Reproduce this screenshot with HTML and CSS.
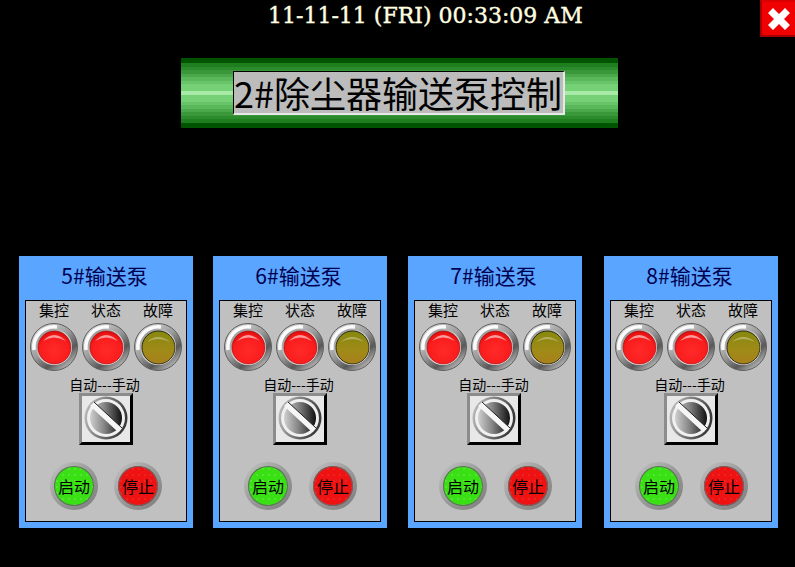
FILE: index.html
```html
<!DOCTYPE html>
<html lang="zh-CN">
<head>
    <meta charset="UTF-8">
    <meta name="viewport" content="width=device-width, initial-scale=1.0">
    <title>2#除尘器输送泵控制</title>
    <link rel="stylesheet" href="styles.css">
</head>
<body>

<!-- shared drawings -->
<svg class="defs" width="0" height="0">
    <defs>
        <linearGradient id="chrome" x1="0.15" y1="0.05" x2="0.85" y2="0.95">
            <stop offset="0" stop-color="#d8d8d8"/>
            <stop offset="0.45" stop-color="#9a9a9a"/>
            <stop offset="0.72" stop-color="#585858"/>
            <stop offset="1" stop-color="#c8c8c8"/>
        </linearGradient>
        <linearGradient id="chromeIn" x1="0.1" y1="0.05" x2="0.9" y2="0.95">
            <stop offset="0" stop-color="#909090"/>
            <stop offset="0.5" stop-color="#d0d0d0"/>
            <stop offset="1" stop-color="#ffffff"/>
        </linearGradient>
        <radialGradient id="redGlow" cx="0.5" cy="0.6" r="0.6">
            <stop offset="0" stop-color="#ff2a2a"/>
            <stop offset="0.75" stop-color="#fa1c1c"/>
            <stop offset="1" stop-color="#d80c0c"/>
        </radialGradient>
        <linearGradient id="oliveGlow" x1="0" y1="0" x2="0" y2="1">
            <stop offset="0" stop-color="#86880e"/>
            <stop offset="0.6" stop-color="#a08a18"/>
            <stop offset="1" stop-color="#a8801c"/>
        </linearGradient>
        <linearGradient id="knob" x1="0" y1="0" x2="1" y2="0">
            <stop offset="0" stop-color="#d0d0d0"/>
            <stop offset="0.45" stop-color="#848484"/>
            <stop offset="1" stop-color="#101010"/>
        </linearGradient>
        <linearGradient id="knobRing" x1="0" y1="0" x2="1" y2="0.3">
            <stop offset="0" stop-color="#c8c8c8"/>
            <stop offset="1" stop-color="#3a3a3a"/>
        </linearGradient>
        <symbol id="lampRed" viewBox="0 0 48 48">
            <circle cx="24" cy="24" r="23.5" fill="url(#chrome)" stroke="#606060"/>
            <path d="M4 27A20.5 20.5 0 0 1 27 4" fill="none" stroke="#fafafa" stroke-width="3.5"/>
            <circle cx="24" cy="24" r="18" fill="url(#chromeIn)"/>
            <circle cx="24.5" cy="24.5" r="16.5" fill="url(#redGlow)" stroke="#a00808" stroke-width="0.6"/>
            <path d="M13 18 Q24 6 36 18 Q24 11 13 18Z" fill="#ff9a9a"/>
        </symbol>
        <symbol id="lampOlive" viewBox="0 0 48 48">
            <circle cx="24" cy="24" r="23.5" fill="url(#chrome)" stroke="#606060"/>
            <path d="M4 27A20.5 20.5 0 0 1 27 4" fill="none" stroke="#fafafa" stroke-width="3.5"/>
            <circle cx="24" cy="24" r="18" fill="url(#chromeIn)"/>
            <circle cx="24.5" cy="24.5" r="16.5" fill="url(#oliveGlow)" stroke="#101000" stroke-width="0.8"/>
            <path d="M13 19 Q24 9 36 19 Q24 13 13 19Z" fill="#b4b060"/>
        </symbol>
        <symbol id="switchTile" viewBox="0 0 54 52">
            <rect width="54" height="52" fill="#000"/>
            <path d="M0 0H54L51 3V49H3L0 52Z" fill="#8c8c8c"/>
            <rect x="3" y="3" width="48" height="46" fill="#e8e8e8"/>
            <circle cx="27" cy="25" r="21.5" fill="url(#knobRing)"/>
            <circle cx="27" cy="25" r="19" fill="#f0f0f0"/>
            <circle cx="27" cy="25" r="16" fill="url(#knob)"/>
            <path d="M11 13L15 9L43 35L39 39Z" fill="#f6f6f6"/>
            <path d="M15 9L43 35" fill="none" stroke="#202020"/>
        </symbol>
    </defs>
</svg>

<header class="topbar">
    <div class="clock">11-11-11 (FRI) 00:33:09 AM</div>
    <button class="close-btn" type="button" aria-label="关闭">
        <svg width="26" height="26" viewBox="0 0 26 26"><path d="M2 7L7 2L13 8L19 2L24 7L18 13L24 19L19 24L13 18L7 24L2 19L8 13Z" fill="#fff"/></svg>
    </button>
</header>

<div class="banner">
    <h1 class="banner-title">2#除尘器输送泵控制</h1>
</div>

<main class="pumps">
    <section class="pump pump-first">
        <h2 class="pump-name">5#输送泵</h2>
        <div class="controls">
            <div class="lamps">
                <span class="lamp-label">集控</span><span class="lamp-label">状态</span><span class="lamp-label">故障</span>
                <svg class="lamp"><use href="#lampRed"/></svg>
                <svg class="lamp"><use href="#lampRed"/></svg>
                <svg class="lamp"><use href="#lampOlive"/></svg>
            </div>
            <div class="mode-label">自动---手动</div>
            <svg class="mode-switch"><use href="#switchTile"/></svg>
            <div class="actions">
                <button class="action action-start" type="button">启动</button>
                <button class="action action-stop" type="button">停止</button>
            </div>
        </div>
    </section>

    <section class="pump">
        <h2 class="pump-name">6#输送泵</h2>
        <div class="controls">
            <div class="lamps">
                <span class="lamp-label">集控</span><span class="lamp-label">状态</span><span class="lamp-label">故障</span>
                <svg class="lamp"><use href="#lampRed"/></svg>
                <svg class="lamp"><use href="#lampRed"/></svg>
                <svg class="lamp"><use href="#lampOlive"/></svg>
            </div>
            <div class="mode-label">自动---手动</div>
            <svg class="mode-switch"><use href="#switchTile"/></svg>
            <div class="actions">
                <button class="action action-start" type="button">启动</button>
                <button class="action action-stop" type="button">停止</button>
            </div>
        </div>
    </section>

    <section class="pump pump-third">
        <h2 class="pump-name">7#输送泵</h2>
        <div class="controls">
            <div class="lamps">
                <span class="lamp-label">集控</span><span class="lamp-label">状态</span><span class="lamp-label">故障</span>
                <svg class="lamp"><use href="#lampRed"/></svg>
                <svg class="lamp"><use href="#lampRed"/></svg>
                <svg class="lamp"><use href="#lampOlive"/></svg>
            </div>
            <div class="mode-label">自动---手动</div>
            <svg class="mode-switch"><use href="#switchTile"/></svg>
            <div class="actions">
                <button class="action action-start" type="button">启动</button>
                <button class="action action-stop" type="button">停止</button>
            </div>
        </div>
    </section>

    <section class="pump pump-fourth">
        <h2 class="pump-name">8#输送泵</h2>
        <div class="controls">
            <div class="lamps">
                <span class="lamp-label">集控</span><span class="lamp-label">状态</span><span class="lamp-label">故障</span>
                <svg class="lamp"><use href="#lampRed"/></svg>
                <svg class="lamp"><use href="#lampRed"/></svg>
                <svg class="lamp"><use href="#lampOlive"/></svg>
            </div>
            <div class="mode-label">自动---手动</div>
            <svg class="mode-switch"><use href="#switchTile"/></svg>
            <div class="actions">
                <button class="action action-start" type="button">启动</button>
                <button class="action action-stop" type="button">停止</button>
            </div>
        </div>
    </section>
</main>

</body>
</html>
```

FILE: styles.css
```css
* {
    box-sizing: border-box;
}
html, body {
    height: 100%;
}
body {
    margin: 0;
    overflow: hidden;
    background: #000;
    font-family: "Noto Sans CJK SC", "Liberation Sans", sans-serif;
    color: #000;
}
.defs {
    display: block;
    height: 0;
}

/* top bar */
.topbar {
    display: flex;
    align-items: flex-start;
    height: 37px;
    padding-left: 268px;
}
.clock {
    font-family: "DejaVu Serif", serif;
    font-size: 22px;
    line-height: 32px;
    -webkit-text-stroke: 0.4px #ffffe0;
    color: #ffffe0;
    white-space: nowrap;
}
.close-btn {
    display: flex;
    align-items: center;
    justify-content: center;
    width: 35px;
    height: 37px;
    margin-left: auto;
    padding: 0;
    border: 2px solid #a80000;
    border-top-color: #d80000;
    border-right: none;
    background: #f00000;
}

/* title banner */
.banner {
    display: flex;
    align-items: center;
    width: 437px;
    height: 70px;
    margin: 21px 0 0 181px;
    padding-left: 52px;
    background: linear-gradient(to bottom,
        #005400 0 5px, #1f7f1f 5px 9px, #2b8a2b 9px 12px, #3a983a 12px 16px, #4aa84a 16px 19px,
        #5ab85a 19px 23px, #68c468 23px 26px, #76d076 26px 33px, #a8eaa8 33px 37px,
        #76d076 37px 44px, #68c468 44px 47px, #5ab85a 47px 51px, #4aa84a 51px 54px,
        #3a983a 54px 58px, #2b8a2b 58px 61px, #1f7f1f 61px 65px, #005400 65px 70px);
}
.banner-title {
    width: 332px;
    height: 44px;
    margin: 0;
    border: 1px solid #000;
    border-right: 2px solid #e8e8e8;
    border-bottom: 2px solid #e8e8e8;
    background: #bcbcbc;
    font-size: 36px;
    font-weight: 400;
    line-height: 40px;
    white-space: nowrap;
}

/* pump panels */
.pumps {
    display: flex;
    gap: 20px;
    margin-top: 128px;
    padding-left: 19px;
}
.pump {
    width: 174px;
    height: 272px;
    padding: 0 6px 6px;
    background: #5aa5ff;
}
.pump-third {
    margin-left: 1px;
}
.pump-fourth {
    margin-left: 2px;
}
.pump-name {
    height: 44px;
    margin: 0;
    padding-right: 3px;
    font-size: 21px;
    font-weight: 400;
    line-height: 39px;
    text-align: center;
    color: #000050;
}
.controls {
    display: flex;
    flex-direction: column;
    align-items: center;
    height: 222px;
    border: 1px solid #000;
    background: #c0c0c0;
}
.lamps {
    display: grid;
    grid-template-columns: repeat(3, 48px);
    column-gap: 4px;
    justify-items: center;
}
.lamp-label {
    height: 22px;
    font-size: 15px;
    line-height: 18px;
}
.lamp {
    display: block;
    width: 48px;
    height: 48px;
}
.mode-label {
    height: 16px;
    margin-top: 5px;
    padding-right: 3px;
    font-size: 14px;
    line-height: 16px;
}
.mode-switch {
    display: block;
    width: 54px;
    height: 52px;
    margin-top: 1px;
}
.pump-third .mode-switch {
    margin-right: 3px;
}
.actions {
    display: flex;
    align-self: flex-start;
    gap: 17px;
    margin: 17px 0 0 24px;
}
.pump-first .actions {
    gap: 16px;
}
.action {
    width: 48px;
    height: 48px;
    padding: 0;
    border: 4px solid transparent;
    border-radius: 50%;
    font-family: inherit;
    font-size: 16px;
    color: #000;
    box-shadow: inset 0 0 0 1px #686868;
}
.action-start {
    background:
        radial-gradient(#ffffff30 0.6px, transparent 1px) 0 0 / 6px 6px padding-box,
        radial-gradient(circle at 50% 45%, #38e014 0 70%, #2cc40c 88%, #1c8c08) padding-box,
        linear-gradient(135deg, #c4c4c4, #9a9a9a 50%, #7c7c7c) border-box;
}
.action-stop {
    background:
        radial-gradient(#ffffff18 0.6px, transparent 1px) 0 0 / 6px 6px padding-box,
        radial-gradient(circle at 50% 45%, #ee1212 0 70%, #d80808 88%, #900000) padding-box,
        linear-gradient(135deg, #c4c4c4, #9a9a9a 50%, #7c7c7c) border-box;
}
```
